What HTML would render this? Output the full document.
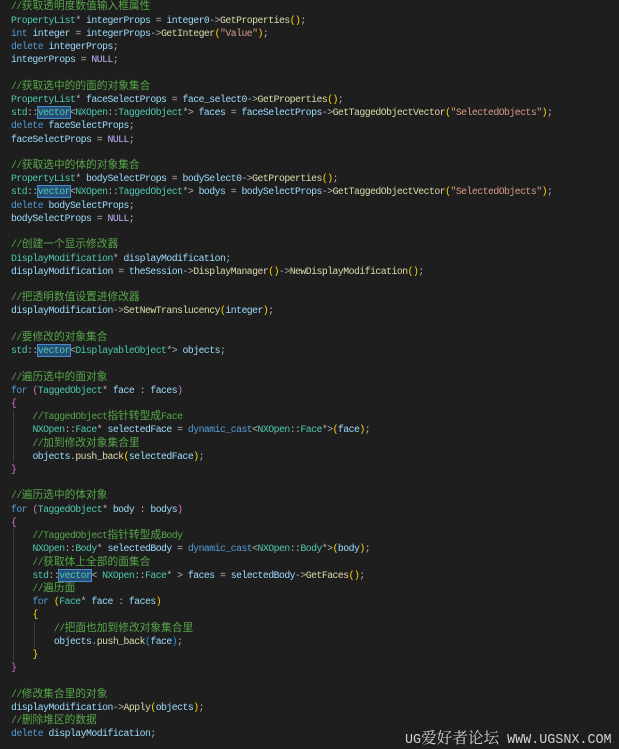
<!DOCTYPE html>
<html><head><meta charset="utf-8"><style>
html,body{margin:0;padding:0;background:#1e1e1e;width:619px;height:749px;overflow:hidden}
#code{position:absolute;left:11px;top:0.4px;font-family:"Liberation Mono",monospace;font-size:9.8px;letter-spacing:-0.52px;color:#dcdcdc}
.l{height:13.22px;line-height:13.22px;white-space:pre;overflow:visible}
.c{font-family:"Noto Sans CJK SC",sans-serif;font-size:10.72px;letter-spacing:0;line-height:0}
.cm{color:#57a64a}.k{color:#569cd6}.t{color:#4ec9b0}.f{color:#dcdcaa}.v{color:#9cdcfe}.s{color:#d69d85}.n{color:#bdb7ff}.p{color:#b4b4b4}
.y{color:#ffd700}.m{color:#da70d6}.b{color:#179fff}
.hl{background:#264f78;outline:1px solid #4a8cc7}
.g{position:absolute;width:1px;background:#3c3c3c}
#wm{position:absolute;left:405px;top:726px;font-family:"Liberation Mono","Noto Serif CJK SC",monospace;font-size:13.4px;color:#d0d0d0;white-space:pre}
#wm .w{font-family:"Noto Serif CJK SC",serif;font-size:15.6px}
</style></head><body>
<div class="g" style="left:13px;top:410px;height:52px"></div>
<div class="g" style="left:13px;top:529px;height:132px"></div>
<div class="g" style="left:34px;top:622px;height:26px"></div>
<div id="code">
<div class="l cm">//<span class="c">获取透明度数值输入框属性</span></div>
<div class="l"><span class="t">PropertyList</span><span class="p">*</span> <span class="v">integerProps</span> <span class="p">=</span> <span class="v">integer0</span><span class="p">-&gt;</span><span class="f">GetProperties</span><span class="y">()</span><span class="p">;</span></div>
<div class="l"><span class="k">int</span> <span class="v">integer</span> <span class="p">=</span> <span class="v">integerProps</span><span class="p">-&gt;</span><span class="f">GetInteger</span><span class="y">(</span><span class="s">"Value"</span><span class="y">)</span><span class="p">;</span></div>
<div class="l"><span class="k">delete</span> <span class="v">integerProps</span><span class="p">;</span></div>
<div class="l"><span class="v">integerProps</span> <span class="p">=</span> <span class="n">NULL</span><span class="p">;</span></div>
<div class="l"> </div>
<div class="l cm">//<span class="c">获取选中的的面的对象集合</span></div>
<div class="l"><span class="t">PropertyList</span><span class="p">*</span> <span class="v">faceSelectProps</span> <span class="p">=</span> <span class="v">face_select0</span><span class="p">-&gt;</span><span class="f">GetProperties</span><span class="y">()</span><span class="p">;</span></div>
<div class="l"><span class="t">std</span><span class="p">::</span><span class="t hl">vector</span><span class="p">&lt;</span><span class="t">NXOpen</span><span class="p">::</span><span class="t">TaggedObject</span><span class="p">*&gt;</span> <span class="v">faces</span> <span class="p">=</span> <span class="v">faceSelectProps</span><span class="p">-&gt;</span><span class="f">GetTaggedObjectVector</span><span class="y">(</span><span class="s">"SelectedObjects"</span><span class="y">)</span><span class="p">;</span></div>
<div class="l"><span class="k">delete</span> <span class="v">faceSelectProps</span><span class="p">;</span></div>
<div class="l"><span class="v">faceSelectProps</span> <span class="p">=</span> <span class="n">NULL</span><span class="p">;</span></div>
<div class="l"> </div>
<div class="l cm">//<span class="c">获取选中的体的对象集合</span></div>
<div class="l"><span class="t">PropertyList</span><span class="p">*</span> <span class="v">bodySelectProps</span> <span class="p">=</span> <span class="v">bodySelect0</span><span class="p">-&gt;</span><span class="f">GetProperties</span><span class="y">()</span><span class="p">;</span></div>
<div class="l"><span class="t">std</span><span class="p">::</span><span class="t hl">vector</span><span class="p">&lt;</span><span class="t">NXOpen</span><span class="p">::</span><span class="t">TaggedObject</span><span class="p">*&gt;</span> <span class="v">bodys</span> <span class="p">=</span> <span class="v">bodySelectProps</span><span class="p">-&gt;</span><span class="f">GetTaggedObjectVector</span><span class="y">(</span><span class="s">"SelectedObjects"</span><span class="y">)</span><span class="p">;</span></div>
<div class="l"><span class="k">delete</span> <span class="v">bodySelectProps</span><span class="p">;</span></div>
<div class="l"><span class="v">bodySelectProps</span> <span class="p">=</span> <span class="n">NULL</span><span class="p">;</span></div>
<div class="l"> </div>
<div class="l cm">//<span class="c">创建一个显示修改器</span></div>
<div class="l"><span class="t">DisplayModification</span><span class="p">*</span> <span class="v">displayModification</span><span class="p">;</span></div>
<div class="l"><span class="v">displayModification</span> <span class="p">=</span> <span class="v">theSession</span><span class="p">-&gt;</span><span class="f">DisplayManager</span><span class="y">()</span><span class="p">-&gt;</span><span class="f">NewDisplayModification</span><span class="y">()</span><span class="p">;</span></div>
<div class="l"> </div>
<div class="l cm">//<span class="c">把透明数值设置进修改器</span></div>
<div class="l"><span class="v">displayModification</span><span class="p">-&gt;</span><span class="f">SetNewTranslucency</span><span class="y">(</span><span class="v">integer</span><span class="y">)</span><span class="p">;</span></div>
<div class="l"> </div>
<div class="l cm">//<span class="c">要修改的对象集合</span></div>
<div class="l"><span class="t">std</span><span class="p">::</span><span class="t hl">vector</span><span class="p">&lt;</span><span class="t">DisplayableObject</span><span class="p">*&gt;</span> <span class="v">objects</span><span class="p">;</span></div>
<div class="l"> </div>
<div class="l cm">//<span class="c">遍历选中的面对象</span></div>
<div class="l"><span class="k">for</span> <span class="m">(</span><span class="t">TaggedObject</span><span class="p">*</span> <span class="v">face</span> <span class="p">:</span> <span class="v">faces</span><span class="m">)</span></div>
<div class="l"><span class="m">{</span></div>
<div class="l cm">    //TaggedObject<span class="c">指针转型成</span>Face</div>
<div class="l">    <span class="t">NXOpen</span><span class="p">::</span><span class="t">Face</span><span class="p">*</span> <span class="v">selectedFace</span> <span class="p">=</span> <span class="k">dynamic_cast</span><span class="p">&lt;</span><span class="t">NXOpen</span><span class="p">::</span><span class="t">Face</span><span class="p">*&gt;</span><span class="y">(</span><span class="v">face</span><span class="y">)</span><span class="p">;</span></div>
<div class="l cm">    //<span class="c">加到修改对象集合里</span></div>
<div class="l">    <span class="v">objects</span><span class="p">.</span><span class="f">push_back</span><span class="y">(</span><span class="v">selectedFace</span><span class="y">)</span><span class="p">;</span></div>
<div class="l"><span class="m">}</span></div>
<div class="l"> </div>
<div class="l cm">//<span class="c">遍历选中的体对象</span></div>
<div class="l"><span class="k">for</span> <span class="m">(</span><span class="t">TaggedObject</span><span class="p">*</span> <span class="v">body</span> <span class="p">:</span> <span class="v">bodys</span><span class="m">)</span></div>
<div class="l"><span class="m">{</span></div>
<div class="l cm">    //TaggedObject<span class="c">指针转型成</span>Body</div>
<div class="l">    <span class="t">NXOpen</span><span class="p">::</span><span class="t">Body</span><span class="p">*</span> <span class="v">selectedBody</span> <span class="p">=</span> <span class="k">dynamic_cast</span><span class="p">&lt;</span><span class="t">NXOpen</span><span class="p">::</span><span class="t">Body</span><span class="p">*&gt;</span><span class="y">(</span><span class="v">body</span><span class="y">)</span><span class="p">;</span></div>
<div class="l cm">    //<span class="c">获取体上全部的面集合</span></div>
<div class="l">    <span class="t">std</span><span class="p">::</span><span class="t hl">vector</span><span class="p">&lt;</span> <span class="t">NXOpen</span><span class="p">::</span><span class="t">Face</span><span class="p">*</span> <span class="p">&gt;</span> <span class="v">faces</span> <span class="p">=</span> <span class="v">selectedBody</span><span class="p">-&gt;</span><span class="f">GetFaces</span><span class="y">()</span><span class="p">;</span></div>
<div class="l cm">    //<span class="c">遍历面</span></div>
<div class="l">    <span class="k">for</span> <span class="y">(</span><span class="t">Face</span><span class="p">*</span> <span class="v">face</span> <span class="p">:</span> <span class="v">faces</span><span class="y">)</span></div>
<div class="l">    <span class="y">{</span></div>
<div class="l cm">        //<span class="c">把面也加到修改对象集合里</span></div>
<div class="l">        <span class="v">objects</span><span class="p">.</span><span class="f">push_back</span><span class="b">(</span><span class="v">face</span><span class="b">)</span><span class="p">;</span></div>
<div class="l">    <span class="y">}</span></div>
<div class="l"><span class="m">}</span></div>
<div class="l"> </div>
<div class="l cm">//<span class="c">修改集合里的对象</span></div>
<div class="l"><span class="v">displayModification</span><span class="p">-&gt;</span><span class="f">Apply</span><span class="y">(</span><span class="v">objects</span><span class="y">)</span><span class="p">;</span></div>
<div class="l cm">//<span class="c">删除堆区的数据</span></div>
<div class="l"><span class="k">delete</span> <span class="v">displayModification</span><span class="p">;</span></div>
</div>
<div id="wm">UG<span class="w">爱好者论坛</span> WWW.UGSNX.COM</div>
</body></html>
